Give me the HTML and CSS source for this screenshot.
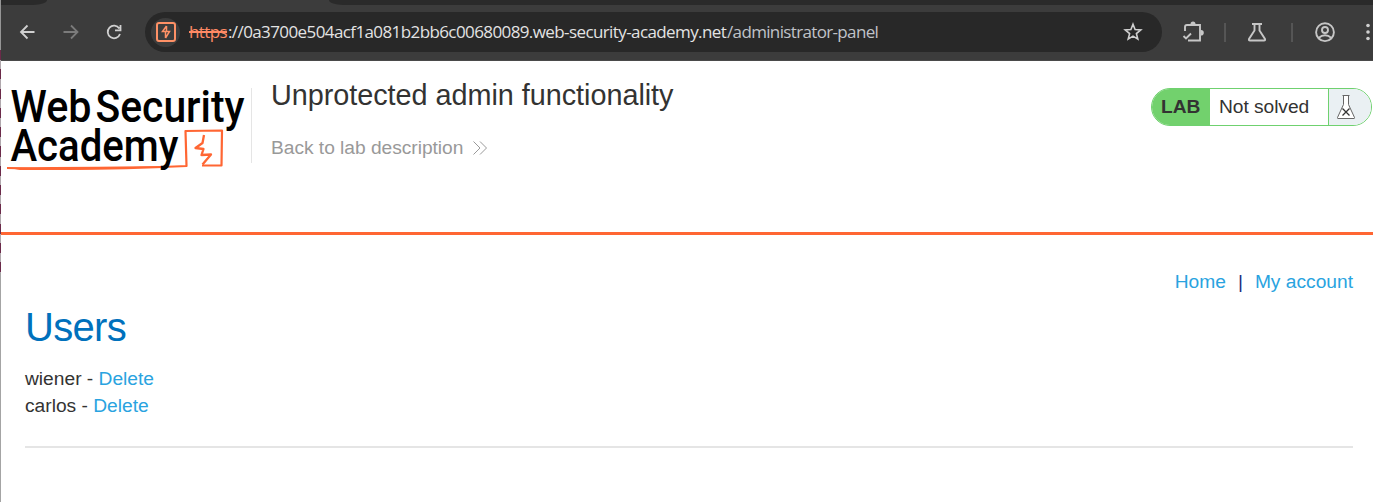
FILE: index.html
```html
<!DOCTYPE html>
<html lang="en">
<head>
<meta charset="utf-8">
<title>Unprotected admin functionality</title>
<link rel="stylesheet" href="styles.css">
</head>
<body>
<div class="edge"></div>
<div class="window">
  <div class="tabstrip"><span class="tab-left"></span><span class="tab-active"></span><span class="tab-right"></span></div>
  <div class="toolbar">
    <svg class="nav-icons" width="144" height="56" viewBox="1 5 144 56" fill="none" stroke-width="1.8">
      <path d="M34.500 32H21.500M27.500 25.500L21 32L27.500 38.500" stroke="#d0d0d0"/>
      <path d="M63.500 32H76.500M71 25.500L77.500 32L71 38.500" stroke="#7b7b7b"/>
      <path d="M119.300 28.500A6.300 6.300 0 1 0 120 34M120.500 25V30.300H115" stroke="#d0d0d0"/>
    </svg>
    <div class="address">
      <span class="site-icon">
        <svg width="20" height="20" viewBox="0 0 20 20" fill="none" stroke="#ff9166">
          <rect x="1" y="1" width="18" height="18" rx="2" stroke-width="2"/>
          <path d="M10.500 4L6.500 9.500H13.500L9.500 16M10.500 4V9.500M9.500 10V16" stroke-width="1.500"/>
        </svg>
      </span>
      <div class="url"><span class="scheme">https</span><span class="host">://0a3700e504acf1a081b2bb6c00680089.web-security-academy.net</span><span class="path">/administrator-panel</span></div>
      <svg class="star" width="20" height="20" viewBox="0 0 20 20" fill="none" stroke="#d0d0d0" stroke-width="1.600">
        <path d="M10 2.200L12.100 7.500L17.800 7.900L13.400 11.600L14.800 17.100L10 14.100L5.200 17.100L6.600 11.600L2.200 7.900L7.900 7.500Z"/>
      </svg>
    </div>
    <svg class="tools" width="211" height="56" viewBox="1162 5 211 56" fill="none" stroke="#c6c6c6" stroke-width="1.900">
      <path d="M1185 31V27Q1185 25 1187 25H1200V40.500H1188"/>
      <path d="M1183.500 36L1186 38.500L1191 33.500"/>
      <path d="M1190.500 24A2.500 2.500 0 0 1 1195.500 24ZM1201 30A2.800 2.800 0 0 1 1201 35.600Z" fill="#c6c6c6" stroke="none"/>
      <path d="M1225 23V42M1292 23V42" stroke="#5d5d5d" stroke-width="1.600"/>
      <path d="M1252 24H1262M1254.500 24V30.500L1249 39Q1248.500 40.500 1250 40.500H1264Q1265.500 40.500 1265 39L1259.500 30.500V24"/>
      <circle cx="1325" cy="32.200" r="8.900"/><circle cx="1325" cy="30" r="3"/>
      <path d="M1318.500 38Q1325 32.500 1331.500 38"/>
      <g fill="#d0d0d0" stroke="none"><circle cx="1368" cy="25.500" r="1.800"/><circle cx="1368" cy="32" r="1.800"/><circle cx="1368" cy="38.500" r="1.800"/></g>
    </svg>
  </div>
  <header class="lab-header">
    <svg class="logo" width="250" height="100" viewBox="1 80 250 100">
      <path d="M7 168Q90 170.500 186.500 166L185.500 131L222 130.500L221.500 165.500H202" fill="none" stroke="#ff6633" stroke-width="2.200" stroke-linejoin="round"/>
      <path d="M7 167.500Q100 166.500 186 166Q90 170 20 170Z" fill="#ff6633"/>
      <path d="M204 135L202.500 143L195.500 148L203.500 149L201.500 155L211 154.500L202.500 164.500" fill="none" stroke="#ff6633" stroke-width="2.300" stroke-linejoin="round"/>
      <g class="logo-text">
        <text x="10.500" y="122" textLength="81" lengthAdjust="spacingAndGlyphs">Web</text>
        <text x="95.500" y="122" textLength="149" lengthAdjust="spacingAndGlyphs">Security</text>
        <text x="10.500" y="161" textLength="168" lengthAdjust="spacingAndGlyphs">Academy</text>
      </g>
    </svg>
    <div class="lab-title">
      <h2>Unprotected admin functionality</h2>
      <a class="back">Back to lab description
        <svg width="14" height="14" viewBox="0 0 14 14" fill="none" stroke="#999" stroke-width="1"><path d="M.5 .5L7 7L.5 13.500M7 .5L13.500 7L7 13.500"/></svg>
      </a>
    </div>
    <div class="status">
      <span class="status-lab">LAB</span><span class="status-text">Not solved</span>
      <span class="status-flask"><svg width="20" height="26" viewBox="0 0 20 26"><path d="M6.500 1.500H13.500M7.500 1.500V10.500L1.500 23.500Q1.200 24.500 2 24.500H18Q18.800 24.500 18.500 23.500L12.500 10.500V1.500" fill="#fff" stroke="#666" stroke-width="1"/><path d="M6.500 14.500L13.500 21.500M13.500 14.500L6.500 21.500" stroke="#333" stroke-width="1.300"/></svg></span>
    </div>
  </header>
  <main class="content">
    <nav class="links"><a>Home</a><span>|</span><a>My account</a></nav>
    <h1>Users</h1>
    <div class="user"><span>wiener - </span><a>Delete</a></div>
    <div class="user"><span>carlos - </span><a>Delete</a></div>
    <hr>
  </main>
</div>
</body>
</html>
```
FILE: styles.css
```css
* { box-sizing: border-box; }
body { margin: 0; height: 502px; display: flex; overflow: hidden; background: #fff; color: #333332; font: 19.2px/27px "Liberation Sans", Arial, sans-serif; }
.edge { width: 1px; background: linear-gradient(#a4a4a4, #a4a4a4) 0 273px no-repeat, linear-gradient(#969696 50px, transparent 50px), repeating-linear-gradient(#6b2a49 0 10px, #b0a8ad 10px 19.300px) 0 50px; }
.window { width: 1372px; display: flex; flex-direction: column; }
.tabstrip { height: 5px; display: flex; background: #3c3c3c; }
.tab-left { width: 46px; background: #2a2a2a; border-bottom-right-radius: 14px 5px; }
.tab-active { flex: none; width: 282px; }
.tab-right { flex: 1; background: #2a2a2a; border-bottom-left-radius: 14px 5px; }
.toolbar { height: 56px; display: flex; align-items: center; background: #3c3c3c; border-bottom: 1px solid #4a4a4a; }
.nav-icons, .tools { flex: none; }
.address { width: 1017px; height: 40px; margin-top: -1px; padding: 0 19px 0 6px; display: flex; align-items: center; border-radius: 20px; background: #282828; }
.site-icon { width: 29px; height: 29px; display: flex; align-items: center; justify-content: center; border-radius: 50%; background: #3c3c3c; }
.url { flex: 1; margin-left: 9px; display: flex; white-space: pre; font: 17px/24px "Open Sans", "Noto Sans", sans-serif; color: #e3e3e3; }
.scheme { width: 39px; color: #ff8a65; text-decoration: line-through; text-decoration-thickness: 2px; letter-spacing: -.6px; }
.host { width: 499px; letter-spacing: -.6px; }
.path { color: #c0c3c9; letter-spacing: -.65px; }
.lab-header { height: 174px; padding: 19px 1px 0 0; display: flex; align-items: flex-start; border-bottom: 3px solid #ff6633; }
.logo { flex: none; overflow: visible; }
.logo-text { font: 500 45px Roboto, sans-serif; fill: #000; }
.lab-title { flex: 1; height: 75px; margin-top: 8px; padding-left: 19px; border-left: 1px solid #e5e5e5; }
h2 { margin: -10px 0 0; font-size: 28.800px; line-height: 34px; font-weight: 400; letter-spacing: -.03px; }
.back { display: flex; align-items: center; gap: 10px; margin-top: 22px; color: #999; letter-spacing: -.03px; }
.status { height: 38px; width: 221px; margin-top: 8px; display: flex; border: 1px solid #6fd16f; border-radius: 19px; overflow: hidden; line-height: 35px; }
.status-lab { width: 58px; padding-left: 9px; font-weight: 700; background: #72d16d; }
.status-text { flex: 1; padding-left: 9px; letter-spacing: -.05px; }
.status-flask { width: 43px; padding: 5px 0 0 7px; display: flex; align-items: flex-start; border-left: 1px solid #6fd16f; background: #eaf0f3; }
.content { padding: 33px 20px 0 24px; }
.links { display: flex; justify-content: flex-end; color: #1c2e7c; }
.links span { width: 29px; text-align: center; }
.content a { color: #29a3e0; }
h1 { margin: 8px 0 14px; font-size: 40px; line-height: 48px; font-weight: 400; color: #0071bc; letter-spacing: -.7px; }
.user { white-space: pre; }
hr { height: 2px; margin: 27px 0 0; border: 0; background: #e5e5e5; }
```
